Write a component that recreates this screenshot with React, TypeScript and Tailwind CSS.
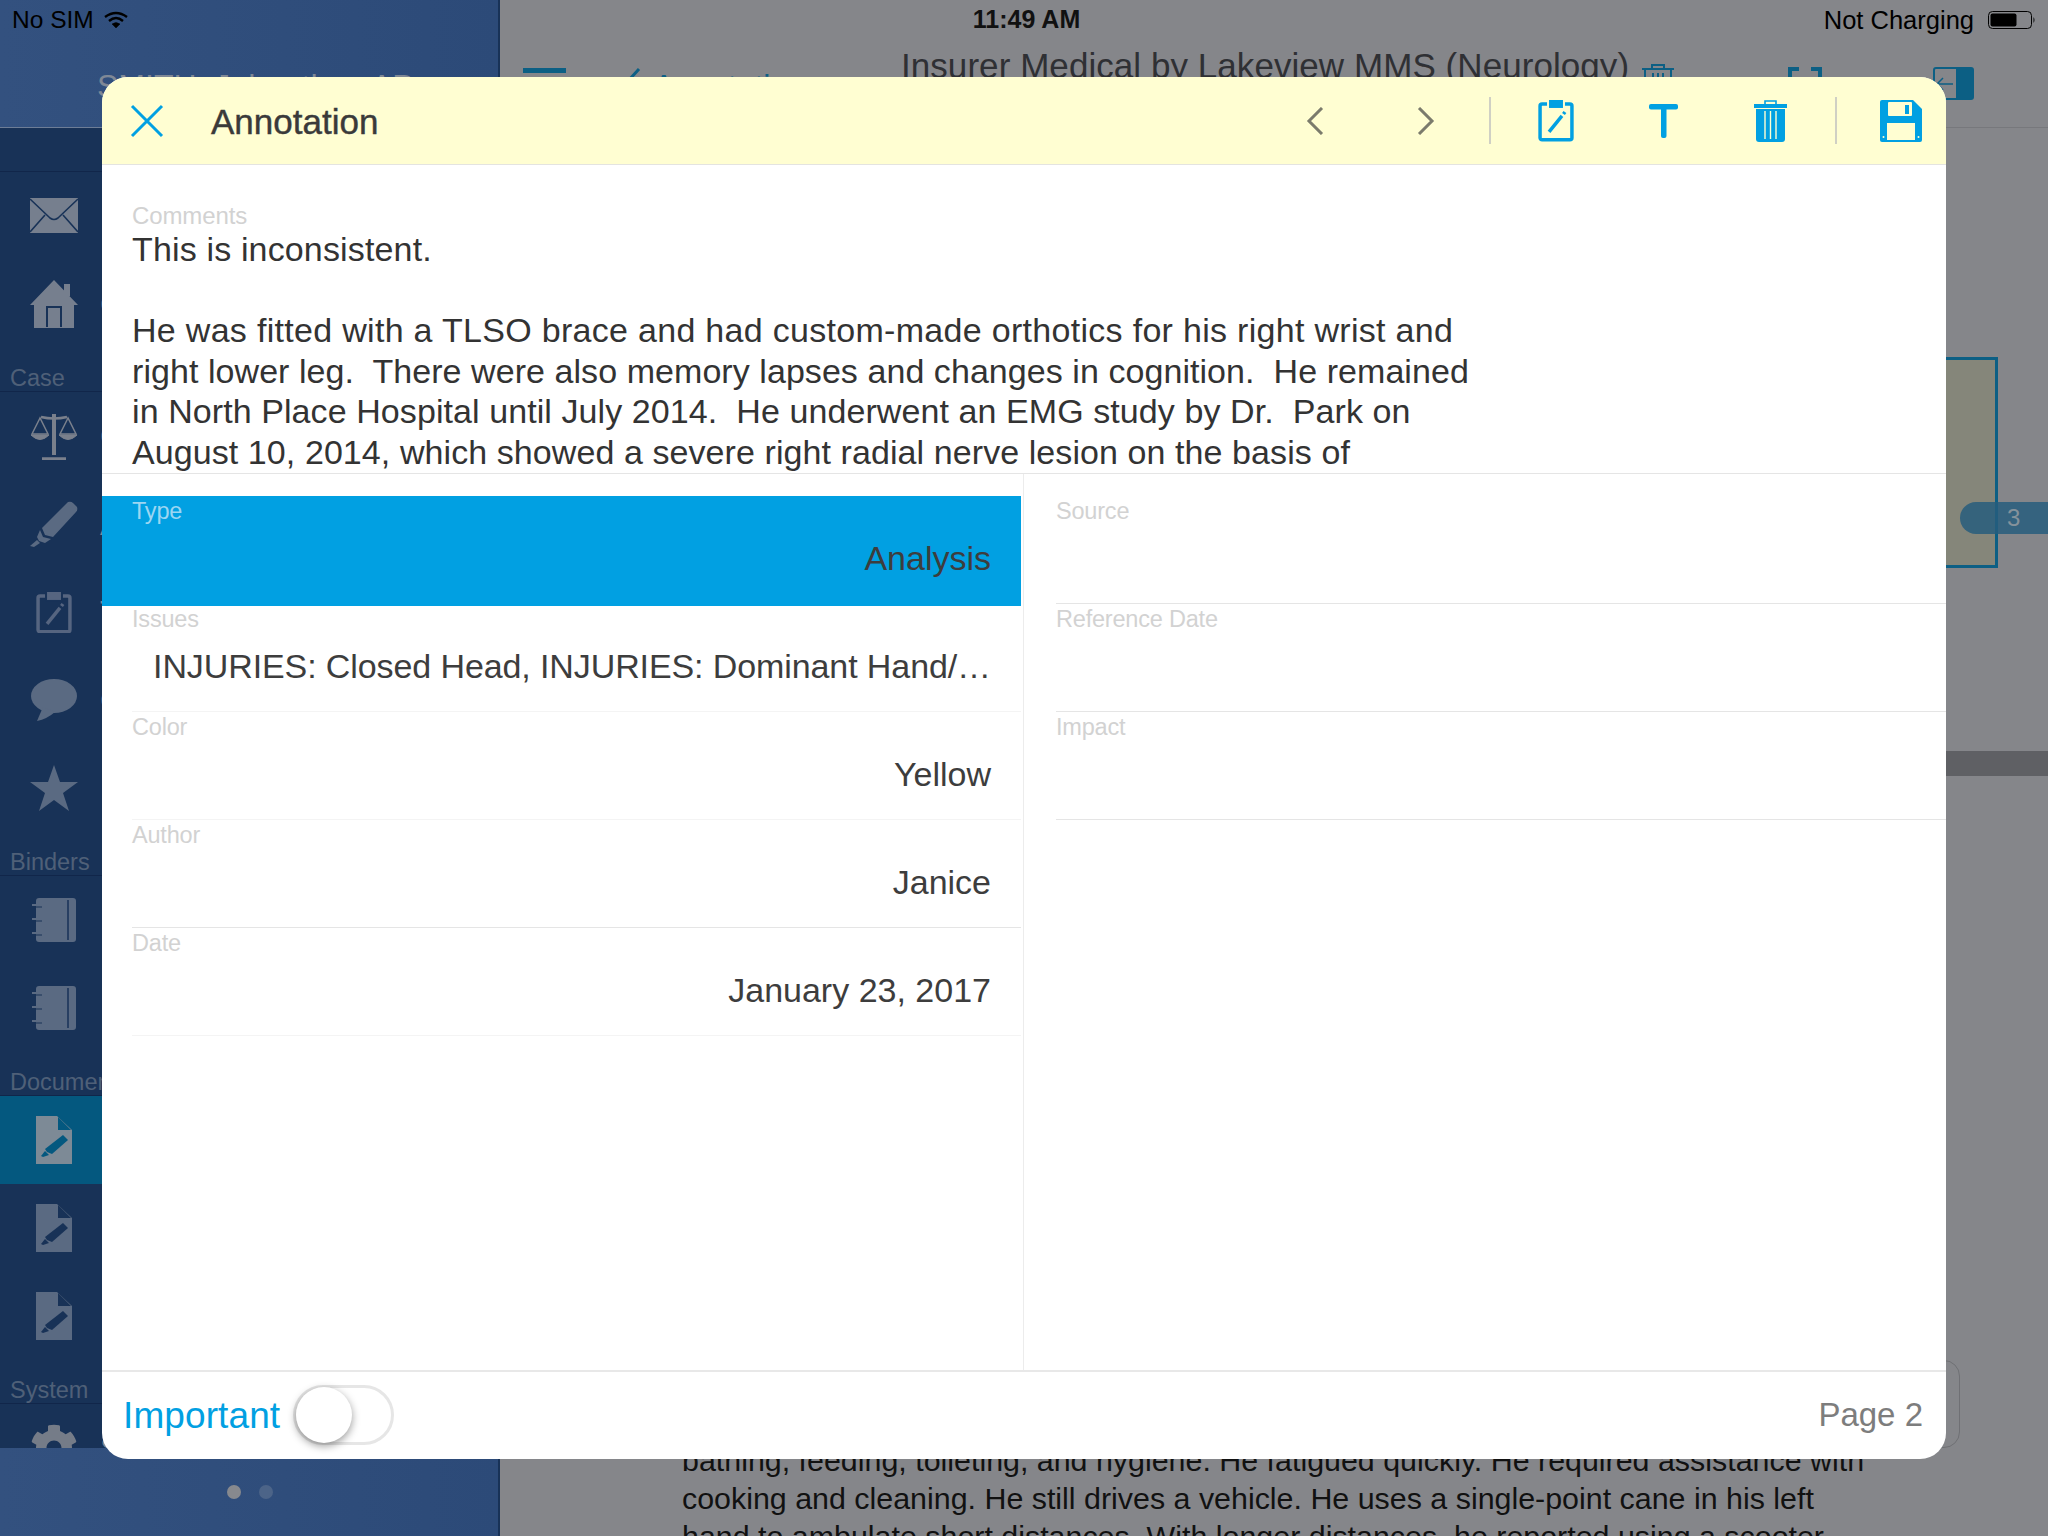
import { ReactNode } from "react";
import { FaCog } from "react-icons/fa";

const NAVY = "#183257";

const MailIcon = () => (
  <svg width="48" height="36" viewBox="0 0 48 36">
    <rect width="48" height="35" fill="#767f8e" />
    <path d="M0 1 L20 20 Q24 23 28 20 L48 1 M0 34 L15 17 M48 34 L33 17" stroke={NAVY} strokeWidth="1.6" fill="none" />
  </svg>
);

const HouseIcon = () => (
  <svg width="48" height="48" viewBox="0 0 48 48">
    <path d="M24 0 L48 25 L44 25 L44 48 L4 48 L4 25 L0 25 Z" fill="#767f8e" />
    <rect x="34" y="4" width="6" height="12" fill="#767f8e" />
    <path d="M17 47 V27 H31 V47" fill="none" stroke={NAVY} strokeWidth="2" />
    <path d="M20 30 H28 V48 H20 Z" fill="#767f8e" />
  </svg>
);

const ScalesIcon = () => (
  <svg width="48" height="48" viewBox="0 0 48 48" fill="none" stroke="#7a808c">
    <path d="M24 2 V43" strokeWidth="4" />
    <path d="M11 5 Q24 8 37 5" strokeWidth="2.5" />
    <path d="M12 47 H36" strokeWidth="3.5" />
    <path d="M10 6 L2 22 H18 Z M38 6 L30 22 H46 Z" strokeWidth="1.5" />
    <path d="M1 23 Q10 32 19 23 Z M29 23 Q38 32 47 23 Z" fill="#7a808c" strokeWidth="1" />
  </svg>
);

const MarkerIcon = () => (
  <svg width="48" height="46" viewBox="0 0 48 46" fill="#5a6a82">
    <path d="M38 1 Q41 0 43 2 L47 6 Q48 9 46 11 L23 36 L15 34 L12 27 Z" />
    <path d="M10 29 L13 36 L21 38 L15 42 L9 40 L7 36 Z" />
    <path d="M7 39 L10 42 L4 46 L0 45 Z" />
  </svg>
);

const ClipboardIcon = ({ color, bg, size = 36 }: { color: string; bg: string; size?: number }) => (
  <svg width={size} height={size * 1.19} viewBox="0 0 36 43" fill="none">
    <rect x="2" y="5" width="32" height="36" rx="2" stroke={color} strokeWidth="3.5" />
    <rect x="10" y="0" width="16" height="10" fill={color} stroke={bg} strokeWidth="2" />
    <path d="M11 33 L24 17" stroke={color} strokeWidth="3.5" />
    <path d="M25.5 15 L27 13" stroke={color} strokeWidth="3.5" />
  </svg>
);

const ChatIcon = () => (
  <svg width="46" height="42" viewBox="0 0 46 42" fill="#5a6a82">
    <ellipse cx="23" cy="17" rx="23" ry="17" />
    <path d="M12 28 L6 42 Q16 40 24 33 Z" />
  </svg>
);

const StarIcon = () => (
  <svg width="48" height="46" viewBox="0 0 48 46" fill="#5a6a82">
    <path d="M24 0 L30 17 L48 17 L33 28 L39 46 L24 35 L9 46 L15 28 L0 17 L18 17 Z" />
  </svg>
);

const BinderIcon = () => (
  <svg width="44" height="44" viewBox="0 0 44 44">
    <rect x="4" y="0" width="40" height="44" rx="3" fill="#5a6a82" />
    <path d="M36 2 V42" stroke={NAVY} strokeWidth="1.5" />
    <path d="M0 7 H7 M0 21 H7 M0 35 H7" stroke="#5a6a82" strokeWidth="2" />
    <path d="M3 9 H10 M3 23 H10 M3 37 H10" stroke={NAVY} strokeWidth="1" />
  </svg>
);

const DocIcon = ({ fill = "#5a6a82", ink = NAVY }: { fill?: string; ink?: string }) => (
  <svg width="36" height="48" viewBox="0 0 36 48">
    <path d="M0 0 H21 L36 14 V48 H0 Z" fill={fill} />
    <path d="M22 1 L35 14 H22 Z" fill={ink} />
    <path d="M27 19 L32 24 L16 38 L11 36 L9 33 Z" fill={ink} />
    <path d="M9 35 L13 39 L7 41 L5 40 Z" fill={ink} />
  </svg>
);

const ChevronIcon = ({ dir }: { dir: "left" | "right" }) => (
  <svg width="18" height="28" viewBox="0 0 18 28" fill="none" stroke="#7b7b6c" strokeWidth="3">
    <path d={dir === "left" ? "M16 1 L3 14 L16 27" : "M2 1 L15 14 L2 27"} />
  </svg>
);

const CloseIcon = () => (
  <svg width="34" height="34" viewBox="0 0 34 34" stroke="#01a0e2" strokeWidth="3" fill="none">
    <path d="M2 2 L32 32 M32 2 L2 32" />
  </svg>
);

const TIcon = () => (
  <svg width="29" height="34" viewBox="0 0 29 34" fill="#01a0e2">
    <rect width="29" height="5.5" rx="2" />
    <rect x="12" y="2" width="5.5" height="32" rx="2" />
  </svg>
);

const TrashIcon = () => (
  <svg width="33" height="42" viewBox="0 0 33 42">
    <path d="M11 4 V1 H22 V4" fill="none" stroke="#01a0e2" strokeWidth="1.6" />
    <rect y="4" width="33" height="4" fill="#01a0e2" />
    <path d="M2 9 H31 V39 Q31 42 28 42 H5 Q2 42 2 39 Z" fill="#01a0e2" />
    <path d="M11 11 V39 M16.5 11 V39 M22 11 V39" stroke="#fffed2" strokeWidth="1.4" />
  </svg>
);

const SaveIcon = () => (
  <svg width="42" height="42" viewBox="0 0 42 42">
    <path d="M2 0 H33 L42 9 V40 Q42 42 40 42 H2 Q0 42 0 40 V2 Q0 0 2 0 Z" fill="#01a0e2" />
    <rect x="8" y="2" width="24" height="14" rx="1" fill="#fffed2" />
    <rect x="25" y="5" width="4" height="9" fill="#01a0e2" />
    <rect x="7" y="23" width="28" height="17" fill="#fffed2" />
    <circle cx="3.5" cy="37" r="1" fill="#fffed2" />
    <circle cx="38.5" cy="37" r="1" fill="#fffed2" />
  </svg>
);

const WifiIcon = () => (
  <svg width="24" height="18" viewBox="0 0 24 18" fill="none" stroke="#000">
    <path d="M1 6 Q12 -2 23 6" strokeWidth="2.4" />
    <path d="M5 10 Q12 4 19 10" strokeWidth="2.4" />
    <path d="M12 17 L8 13 Q12 10 16 13 Z" fill="#000" strokeWidth="0.5" />
  </svg>
);

const BatteryIcon = () => (
  <svg width="48" height="20" viewBox="0 0 48 20">
    <rect x="0.5" y="1.5" width="43" height="17" rx="4" fill="none" stroke="#000" strokeWidth="1" />
    <rect x="2.5" y="3.5" width="26" height="13" rx="2" fill="#000" />
    <path d="M45.5 7 Q47.5 10 45.5 13 Z" fill="#000" />
  </svg>
);

const SmallTrashIcon = () => (
  <svg width="32" height="30" viewBox="0 0 32 30" fill="none" stroke="#0c5f84" strokeWidth="2">
    <path d="M10 5 V1 H22 V5 M0 5 H32 M3 5 V30 H29 V5 M11 9 V30 M16 9 V30 M21 9 V30" />
  </svg>
);

const BackChevron = () => (
  <svg width="14" height="24" viewBox="0 0 14 24" fill="none" stroke="#0c5f84" strokeWidth="3">
    <path d="M12 1 L2 12 L12 23" />
  </svg>
);

const PanelIcon = () => (
  <div className="mr-[74px] mt-[20px] w-[41px] h-[33px] border-2 border-[#0c5f84] rounded-[3px] flex justify-between items-center">
    <svg width="17" height="14" viewBox="0 0 17 14" fill="none" stroke="#0c5f84" strokeWidth="1.5" className="ml-[1px]">
      <path d="M17 7 H1 M7 1 L1 7 L7 13" />
    </svg>
    <div className="w-[16px] h-full bg-[#0c5f84]" />
  </div>
);

type NavRow = { icon: ReactNode; label: string; active?: boolean };

const NavSection = ({ title, rows }: { title?: string; rows: NavRow[] }) => (
  <div>
    <div className="h-[44px] flex items-end border-b border-[#11264a] text-[23.5px] leading-[26px] pl-[10px] text-[#4f6078] whitespace-nowrap">
      {title}
    </div>
    {rows.map((row, i) => (
      <div key={i} className={`h-[88px] flex items-center ${row.active ? "bg-[#04587f]" : ""}`}>
        <div className="w-[100px] pl-[30px] pr-[22px] flex justify-center shrink-0">{row.icon}</div>
        <span className="text-[32px] text-[#7d8796] whitespace-nowrap">{row.label}</span>
      </div>
    ))}
  </div>
);

const Sidebar = () => (
  <div className="w-[500px] h-full shrink-0 flex flex-col border-r-2 border-[#183257] bg-[#183257]">
    <div className="h-[128px] shrink-0 bg-gradient-to-r from-[#33517f] to-[#2c4a78] border-b border-[#6d7d96] pt-[68px] pl-[97px] text-[32px] leading-[36px] text-[#7f8896] whitespace-nowrap">
      SMITH, Johnathan AP
    </div>
    <div className="flex-1 overflow-hidden">
      <NavSection
        rows={[
          { icon: <MailIcon />, label: "Inbox" },
          { icon: <HouseIcon />, label: "Case" },
        ]}
      />
      <NavSection
        title="Case"
        rows={[
          { icon: <ScalesIcon />, label: "Case" },
          { icon: <MarkerIcon />, label: "Annotations" },
          { icon: <ClipboardIcon color="#566580" bg={NAVY} />, label: "Tasks" },
          { icon: <ChatIcon />, label: "Comments" },
          { icon: <StarIcon />, label: "Bookmarks" },
        ]}
      />
      <NavSection
        title="Binders"
        rows={[
          { icon: <BinderIcon />, label: "Binder" },
          { icon: <BinderIcon />, label: "Binder" },
        ]}
      />
      <NavSection
        title="Documents"
        rows={[
          { icon: <DocIcon fill="#7d8a96" ink="#04587f" />, label: "Document", active: true },
          { icon: <DocIcon />, label: "Document" },
          { icon: <DocIcon />, label: "Document" },
        ]}
      />
      <NavSection title="System" rows={[{ icon: <FaCog size={50} color="#757c88" />, label: "Settings" }]} />
    </div>
    <div className="h-[88px] shrink-0 bg-gradient-to-r from-[#33517f] to-[#2c4a78] flex justify-center items-start pt-[37px] gap-[18px] pl-[2px]">
      <span className="w-[14px] h-[14px] rounded-full bg-[#87898e]" />
      <span className="w-[14px] h-[14px] rounded-full bg-[#4c6488]" />
    </div>
  </div>
);

const DocumentPane = () => (
  <div className="flex-1 h-full bg-[#85868a] flex flex-col relative overflow-hidden">
    <div className="h-[128px] shrink-0 border-b border-[#77787c] flex items-start pt-[47px] pl-[23px]">
      <div className="w-[43px] mt-[21px] h-[5px] bg-[#0c5f84]" />
      <div className="w-[335px] mt-[21px] pl-[61px] flex gap-[12px] text-[32px] leading-[36px] text-[#0c5f84] whitespace-nowrap">
        <BackChevron />
        <span>Annotations</span>
      </div>
      <div className="text-[35px] tracking-[0.06px] leading-[38px] text-[#2f3034] whitespace-nowrap">Insurer Medical by Lakeview MMS (Neurology)</div>
      <div className="ml-[13px] mt-[17px]">
        <SmallTrashIcon />
      </div>
      <div className="ml-auto mr-[111px] mt-[20px] w-[34px] h-[12px] flex justify-between">
        <div className="w-[11px] h-full border-t-4 border-l-4 border-[#0c5f84]" />
        <div className="w-[11px] h-full border-t-4 border-r-4 border-[#0c5f84]" />
      </div>
      <PanelIcon />
    </div>
    <div className="h-[25px] mt-[623px] shrink-0 bg-[#5f6064]" />
    <div className="mt-auto pl-[182px] text-[30.4px] leading-[38px] text-[#111] whitespace-nowrap h-[95px] overflow-hidden">
      <p>bathing, feeding, toileting, and hygiene. He fatigued quickly. He required assistance with</p>
      <p>cooking and cleaning. He still drives a vehicle. He uses a single-point cane in his left</p>
      <p>hand to ambulate short distances. With longer distances, he reported using a scooter.</p>
    </div>
    <div className="absolute left-[1000px] top-[357px] w-[498px] h-[211px] bg-[#85867a] border-[3px] border-[#0c5f84]" />
    <div className="absolute left-[1460px] top-[502px] w-[100px] h-[32px] rounded-l-[16px] bg-[#275d7c]/85 text-[24px] leading-[32px] text-[#85929b] pl-[47px]">3</div>
    <div className="absolute left-[1300px] top-[1360px] w-[160px] h-[88px] border border-[#6f7074] rounded-[16px]" />
  </div>
);

type FieldProps = { label: string; value?: string; line?: string; selected?: boolean; valueClass?: string };

const Field = ({ label, value, line = "border-[#f4f4f4]", selected, valueClass = "" }: FieldProps) => (
  <div className={`h-[108px] ${selected ? "h-[110px] -mb-[2px] bg-[#01a0e2] relative" : ""}`}>
    <div className={`h-full ml-[30px] pr-[30px] text-right ${selected ? "" : `border-b ${line}`}`}>
      <div className={`text-left text-[23.5px] tracking-[-0.2px] leading-[30px] ${selected ? "text-[#9cd6f2]" : "text-[#d2d2d2]"}`}>{label}</div>
      {value && <div className={`text-[34px] leading-[40px] mt-[12px] text-[#3d3d3d] whitespace-nowrap ${valueClass}`}>{value}</div>}
    </div>
  </div>
);

const comments = [
  { text: "This is inconsistent.", tracking: "tracking-[0.15px]" },
  { text: "\u00a0", tracking: "" },
  { text: "He was fitted with a TLSO brace and had custom-made orthotics for his right wrist and", tracking: "tracking-[0.3px]" },
  { text: "right lower leg.  There were also memory lapses and changes in cognition.  He remained", tracking: "tracking-[0.06px]" },
  { text: "in North Place Hospital until July 2014.  He underwent an EMG study by Dr.  Park on", tracking: "tracking-[0.08px]" },
  { text: "August 10, 2014, which showed a severe right radial nerve lesion on the basis of", tracking: "tracking-[0.08px]" },
];

const AnnotationModal = () => (
  <div className="absolute left-[102px] top-[77px] w-[1844px] h-[1382px] rounded-[26px] overflow-hidden bg-white flex flex-col">
    <div className="h-[88px] shrink-0 bg-[#fffed2] border-b border-[#e4e4e0] flex items-center pl-[28px]">
      <CloseIcon />
      <span className="ml-[47px] pt-[3px] text-[35px] text-[#3a3a3a] [-webkit-text-stroke:0.4px_#3a3a3a]">Annotation</span>
      <div className="ml-[928px] flex items-center">
        <ChevronIcon dir="left" />
        <div className="ml-[93px]"><ChevronIcon dir="right" /></div>
        <div className="ml-[54px] w-[2px] h-[47px] bg-[#d0d0c4]" />
        <div className="ml-[47px]"><ClipboardIcon color="#01a0e2" bg="#fffed2" /></div>
        <div className="ml-[75px]"><TIcon /></div>
        <div className="ml-[76px]"><TrashIcon /></div>
        <div className="ml-[48px] w-[2px] h-[47px] bg-[#d0d0c4]" />
        <div className="ml-[43px]"><SaveIcon /></div>
      </div>
    </div>

    <div className="h-[309px] shrink-0 border-b border-[#e5e5e5] pl-[30px] pt-[38px] overflow-hidden">
      <div className="text-[24px] tracking-[-0.1px] leading-[26px] text-[#d2d2d2]">Comments</div>
      <div className="text-[34px] leading-[40.5px] text-[#333] whitespace-pre">
        {comments.map((line, i) => (
          <p key={i} className={line.tracking}>{line.text}</p>
        ))}
      </div>
    </div>

    <div className="flex-1 flex pt-[22px]">
      <div className="w-[922px] shrink-0 border-r border-[#ececec] -mt-[22px] pt-[22px] pr-[2px]">
        <Field label="Type" value="Analysis" selected />
        <Field label="Issues" value="INJURIES: Closed Head, INJURIES: Dominant Hand/…" valueClass="tracking-[-0.1px]" />
        <Field label="Color" value="Yellow" />
        <Field label="Author" value="Janice" line="border-[#e5e5e5]" />
        <Field label="Date" value="January 23, 2017" />
      </div>
      <div className="flex-1">
        {["Source", "Reference Date", "Impact"].map((label) => (
          <div key={label} className="h-[108px] ml-[32px] border-b border-[#e5e5e5] text-[23.5px] tracking-[-0.2px] leading-[30px] text-[#d2d2d2]">
            {label}
          </div>
        ))}
      </div>
    </div>

    <div className="h-[89px] shrink-0 border-t-2 border-[#e8e8e8] flex items-center pl-[21px] pr-[23px] pb-[1px]">
      <span className="text-[37px] tracking-[0.1px] pt-[1px] text-[#01a0e2]">Important</span>
      <div className="ml-[13px] w-[101px] h-[60px] rounded-full border-[3px] border-[#e6e6e6] flex items-center">
        <div className="w-[56px] h-[56px] rounded-full bg-white shadow-[0_3px_8px_rgba(0,0,0,0.4)]" />
      </div>
      <span className="ml-auto text-[33px] text-[#7d7d7d]">Page 2</span>
    </div>
  </div>
);

const StatusBar = () => (
  <div className="absolute left-0 top-0 w-full h-[40px] px-[12px] grid grid-cols-3 items-center text-[25px] text-black">
    <div className="flex items-center gap-[10px]">
      <span className="text-[24.5px]">No SIM</span>
      <WifiIcon />
    </div>
    <div className="text-center font-bold text-[25px] pl-[5px] text-[#111]">11:49 AM</div>
    <div className="flex items-center justify-end gap-[14px]">
      <span className="text-[25.5px]">Not Charging</span>
      <BatteryIcon />
    </div>
  </div>
);

const App = () => (
  <div className="relative w-[2048px] h-[1536px] overflow-hidden flex font-['Liberation_Sans',sans-serif]">
    <Sidebar />
    <DocumentPane />
    <AnnotationModal />
    <StatusBar />
  </div>
);

export default App;
